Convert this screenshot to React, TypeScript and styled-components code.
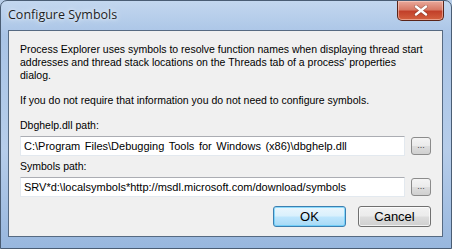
import styled, { createGlobalStyle } from "styled-components";

const GlobalStyle = createGlobalStyle`
  html, body {
    margin: 0;
    padding: 0;
    background: #b7cde8;
  }
`;

function App() {
  return (
    <>
      <GlobalStyle />
      <Window>
        <TitleBar>
          <Title>Configure Symbols</Title>
          <CloseButton>
            <svg width="14" height="11" viewBox="0 0 14 11">
              <path
                d="M2 1.5 L12 9.5 M12 1.5 L2 9.5"
                stroke="#3a1a14"
                strokeWidth="3.6"
                strokeLinecap="round"
                opacity="0.35"
              />
              <path
                d="M2 1.5 L12 9.5 M12 1.5 L2 9.5"
                stroke="#ffffff"
                strokeWidth="2.4"
                strokeLinecap="round"
              />
            </svg>
          </CloseButton>
        </TitleBar>
        <Client>
          <Paragraph>
            Process Explorer uses symbols to resolve function names when
            displaying thread start addresses and thread stack locations on the
            Threads tab of a process' properties dialog.
          </Paragraph>
          <Paragraph>
            If you do not require that information you do not need to configure
            symbols.
          </Paragraph>
          <Label>Dbghelp.dll path:</Label>
          <FieldRow>
            <TextBox defaultValue="C:\Program Files\Debugging Tools for Windows (x86)\dbghelp.dll" />
            <BrowseButton>...</BrowseButton>
          </FieldRow>
          <Label $compact>Symbols path:</Label>
          <FieldRow>
            <TextBox defaultValue="SRV*d:\localsymbols*http://msdl.microsoft.com/download/symbols" />
            <BrowseButton>...</BrowseButton>
          </FieldRow>
          <ButtonRow>
            <PushButton $primary>OK</PushButton>
            <PushButton>Cancel</PushButton>
          </ButtonRow>
        </Client>
      </Window>
    </>
  );
}

export default App;

const Window = styled.div`
  box-sizing: border-box;
  width: 452px;
  height: 249px;
  display: flex;
  flex-direction: column;
  padding: 0 8px 11px 7px;
  border: 1px solid #4a5d74;
  border-radius: 7px 7px 0 0;
  background: linear-gradient(
    180deg,
    #c3d7ef 0%,
    #a9c4e6 14%,
    #b6cdea 60%,
    #98b7de 100%
  );
`;

const TitleBar = styled.div`
  height: 29px;
  display: flex;
  align-items: flex-start;
  justify-content: space-between;
`;

const Title = styled.span`
  margin-top: 5px;
  font-family: "Open Sans", "Liberation Sans", sans-serif;
  font-size: 12.5px;
  color: #1e1e1e;
  text-shadow: 0 0 6px #eaf2fb, 0 0 3px #eaf2fb;
`;

const CloseButton = styled.div`
  box-sizing: border-box;
  width: 47px;
  height: 20px;
  margin-right: -1px;
  display: flex;
  align-items: center;
  justify-content: center;
  border: 1px solid #5a2418;
  border-top: none;
  border-radius: 0 0 5px 5px;
  background: linear-gradient(
    180deg,
    #e9a99b 0%,
    #d87a66 45%,
    #c2402a 55%,
    #d4613f 100%
  );
  box-shadow: inset 0 0 0 1px rgba(255, 220, 210, 0.5);
`;

const Client = styled.div`
  flex: 1;
  display: flex;
  flex-direction: column;
  padding: 12px 10px 0 11px;
  border: 1px solid #566a82;
  background: #f0f0f0;
  font-family: "Liberation Sans", Arial, sans-serif;
  font-size: 10.5px;
  color: #000;
`;

const Paragraph = styled.p`
  margin: 0 0 12px 0;
  padding-right: 5px;
  line-height: 13px;
`;

const Label = styled.div<{ $compact?: boolean }>`
  margin-top: ${(p) => (p.$compact ? "4px" : "0")};
  line-height: 13px;
  margin-bottom: 4px;
`;

const FieldRow = styled.div`
  display: flex;
  align-items: center;
  gap: 6px;
`;

const TextBox = styled.input`
  box-sizing: border-box;
  flex: 1;
  height: 20px;
  padding: 0 3px;
  border: 1px solid #e3e9ef;
  border-top-color: #abadb3;
  background: #fff;
  font-family: "Liberation Sans", Arial, sans-serif;
  font-size: 11px;
  word-spacing: 1.5px;
  color: #000;
  outline: none;
`;

const BrowseButton = styled.div`
  box-sizing: border-box;
  width: 20px;
  height: 18px;
  margin-right: 1px;
  display: flex;
  align-items: flex-end;
  justify-content: center;
  padding-bottom: 4px;
  border: 1px solid #8b8b8b;
  border-radius: 3px;
  background: linear-gradient(180deg, #f4f4f4 0%, #ebebeb 48%, #dddddd 52%, #d0d0d0 100%);
  font-size: 9px;
  line-height: 9px;
  color: #444;
`;

const ButtonRow = styled.div`
  display: flex;
  justify-content: flex-end;
  gap: 12px;
  margin-top: 9px;
  padding-right: 1px;
`;

const PushButton = styled.div<{ $primary?: boolean }>`
  box-sizing: border-box;
  width: 73px;
  height: 21px;
  display: flex;
  align-items: center;
  justify-content: center;
  border: 1px solid ${(p) => (p.$primary ? "#3c7fb1" : "#707070")};
  border-radius: 3px;
  background: ${(p) =>
    p.$primary
      ? "linear-gradient(180deg, #eaf6fd 0%, #d9f0fc 48%, #bee6fd 52%, #a7d9f5 100%)"
      : "linear-gradient(180deg, #f2f2f2 0%, #ebebeb 48%, #dddddd 52%, #cfcfcf 100%)"};
  box-shadow: inset 0 0 0 1px
    ${(p) => (p.$primary ? "rgba(80, 200, 250, 0.6)" : "rgba(255, 255, 255, 0.7)")};
  font-size: 13px;
`;
